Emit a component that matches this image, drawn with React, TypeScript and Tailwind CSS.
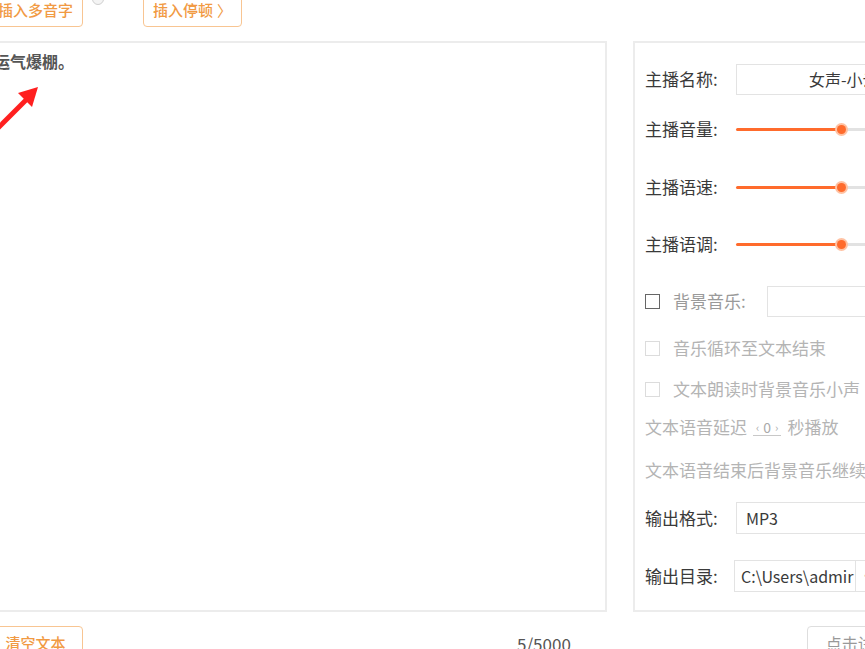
import React from "react";

function OrangeButton({ children, className = "" }: { children: React.ReactNode; className?: string }) {
  return (
    <div
      className={`h-[33px] flex items-center justify-center rounded-[4px] border border-[#f8c592] text-[15px] font-medium text-[#f19a43] bg-white ${className}`}
    >
      {children}
    </div>
  );
}

function Slider() {
  return (
    <div className="flex-1 flex items-center h-full">
      <div className="w-[105px] h-[3px] bg-[#ff6b2c] rounded-l-full" />
      <div className="w-[9px] h-[9px] -mx-[4px] rounded-full bg-[#ff6b2c] ring-2 ring-[#ffc2a3] z-10" />
      <div className="flex-1 h-[3px] bg-[#e2e2e2]" />
    </div>
  );
}

function Label({ children, muted }: { children: React.ReactNode; muted?: boolean }) {
  return (
    <span className={`text-[17px] whitespace-nowrap ${muted ? "text-[#b4b4b4]" : "text-[#3a3a3a]"}`}>
      {children}
    </span>
  );
}

function Check({ enabled }: { enabled?: boolean }) {
  return (
    <div
      className={`w-[15px] h-[15px] shrink-0 border ${enabled ? "border-[#666] border-[1.5px]" : "border-[#dcdcdc]"} bg-white`}
    />
  );
}

export default function App() {
  return (
    <div className="w-[865px] h-[649px] overflow-hidden bg-white relative font-['Noto_Sans_CJK_SC','Noto_Sans',sans-serif]">
      <div className="ml-[-12px] w-[940px]">
        {/* toolbar */}
        <div className="h-[41px] flex items-start">
          <OrangeButton className="mt-[-6px] w-[95px]">插入多音字</OrangeButton>
          <div className="ml-[9px] mt-[-7px] w-[12px] h-[12px] rounded-full border border-[#cfcfcf] bg-[#f4f4f4]" />
          <OrangeButton className="ml-[39px] mt-[-6px] w-[99px] gap-[4px]">
            插入停顿
            <span className="text-[15px] font-normal leading-none">〉</span>
          </OrangeButton>
        </div>

        {/* main */}
        <div className="flex gap-[26px]">
          <div className="w-[619px] h-[571px] border-2 border-[#ececec] px-[8px] pt-[8px]">
            <p className="ml-[-4px] text-[16px] leading-5 font-semibold text-[#555]">运气爆棚。</p>
          </div>

          <div className="w-[270px] h-[571px] border-2 border-[#ececec] border-r-0 pl-[10px] pt-[20px] flex flex-col">
            <div className="h-8 flex items-center">
              <div className="w-[91px]"><Label>主播名称:</Label></div>
              <div className="flex-1 h-[31px] border border-[#e3e3e3] flex items-center pl-[72px] text-[16px] text-[#3a3a3a] whitespace-nowrap">
                女声-小云
              </div>
            </div>
            <div className="h-8 mt-[18px] flex items-center">
              <div className="w-[91px]"><Label>主播音量:</Label></div>
              <Slider />
            </div>
            <div className="h-8 mt-[26px] flex items-center">
              <div className="w-[91px]"><Label>主播语速:</Label></div>
              <Slider />
            </div>
            <div className="h-8 mt-[25px] flex items-center">
              <div className="w-[91px]"><Label>主播语调:</Label></div>
              <Slider />
            </div>
            <div className="h-8 mt-[25px] flex items-center">
              <Check enabled />
              <span className="ml-[13px] w-[94px] text-[17px] text-[#9a9a9a] whitespace-nowrap">背景音乐:</span>
              <div className="flex-1 h-[31px] border border-[#e3e3e3]" />
            </div>
            <div className="h-8 mt-[15px] flex items-center">
              <Check />
              <span className="ml-[13px]"><Label muted>音乐循环至文本结束</Label></span>
            </div>
            <div className="h-8 mt-[9px] flex items-center">
              <Check />
              <span className="ml-[13px]"><Label muted>文本朗读时背景音乐小声</Label></span>
            </div>
            <div className="h-8 mt-[6px] flex items-center gap-[6px]">
              <Label muted>文本语音延迟</Label>
              <span className="flex items-center gap-[4px] border-b border-[#c8c8c8] px-[3px] text-[14px] leading-4 text-[#aaa]">
                <span className="text-[11px]">‹</span>0<span className="text-[11px]">›</span>
              </span>
              <Label muted>秒播放</Label>
            </div>
            <div className="h-8 mt-[11px] flex items-center">
              <Label muted>文本语音结束后背景音乐继续播放</Label>
            </div>
            <div className="h-8 mt-[16px] flex items-center">
              <div className="w-[91px]"><Label>输出格式:</Label></div>
              <div className="flex-1 h-[32px] border border-[#e3e3e3] flex items-center pl-[9px] text-[16px] text-[#3a3a3a]">
                MP3
              </div>
            </div>
            <div className="h-8 mt-[26px] flex items-center">
              <div className="w-[89px]"><Label>输出目录:</Label></div>
              <div className="w-[122px] h-[32px] border border-[#e3e3e3] flex items-center pl-[6px] text-[16px] text-[#3a3a3a] whitespace-nowrap overflow-hidden">
                C:\Users\admir
              </div>
              <div className="w-[40px] h-[32px] border border-l-0 border-[#e3e3e3] flex items-center pl-[4px] text-[#999] text-[12px]">·</div>
            </div>
          </div>
        </div>

        {/* footer */}
        <div className="mt-[14px] flex items-start">
          <OrangeButton className="w-[95px] h-[34px]">清空文本</OrangeButton>
          <span className="ml-[434px] mt-[5px] text-[17px] text-[#555]">5/5000</span>
          <div className="ml-[236px] w-[110px] h-[34px] rounded-[4px] border border-[#dedede] flex items-center pl-[18px] text-[16px] text-[#999] whitespace-nowrap">
            点击试听
          </div>
        </div>
      </div>

      {/* annotation arrow */}
      <svg className="absolute left-0 top-0 pointer-events-none" width="60" height="140" viewBox="0 0 60 140">
        <line x1="-6" y1="132" x2="26" y2="100" stroke="#ff1f1f" strokeWidth="5" />
        <polygon points="38,87 32,107 18,93" fill="#ff1f1f" />
      </svg>
    </div>
  );
}
